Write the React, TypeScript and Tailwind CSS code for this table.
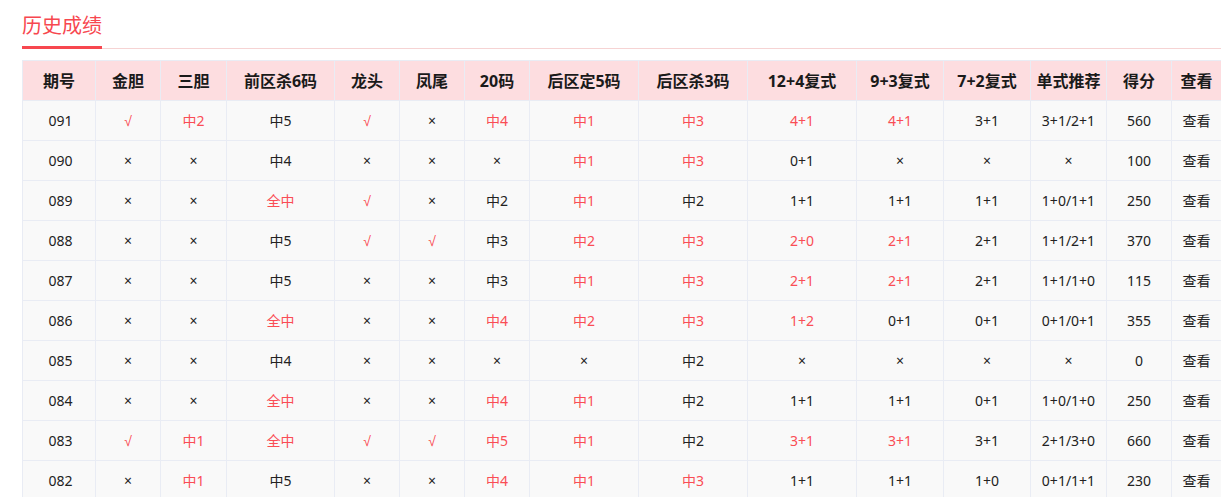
import React from "react";

type Cell = string | [string];

const R = (s: string): [string] => [s];

const rows: Cell[][] = [
  ["091", R("√"), R("中2"), "中5", R("√"), "×", R("中4"), R("中1"), R("中3"), R("4+1"), R("4+1"), "3+1", "3+1/2+1", "560"],
  ["090", "×", "×", "中4", "×", "×", "×", R("中1"), R("中3"), "0+1", "×", "×", "×", "100"],
  ["089", "×", "×", R("全中"), R("√"), "×", "中2", R("中1"), "中2", "1+1", "1+1", "1+1", "1+0/1+1", "250"],
  ["088", "×", "×", "中5", R("√"), R("√"), "中3", R("中2"), R("中3"), R("2+0"), R("2+1"), "2+1", "1+1/2+1", "370"],
  ["087", "×", "×", "中5", "×", "×", "中3", R("中1"), R("中3"), R("2+1"), R("2+1"), "2+1", "1+1/1+0", "115"],
  ["086", "×", "×", R("全中"), "×", "×", R("中4"), R("中2"), R("中3"), R("1+2"), "0+1", "0+1", "0+1/0+1", "355"],
  ["085", "×", "×", "中4", "×", "×", "×", "×", "中2", "×", "×", "×", "×", "0"],
  ["084", "×", "×", R("全中"), "×", "×", R("中4"), R("中1"), "中2", "1+1", "1+1", "0+1", "1+0/1+0", "250"],
  ["083", R("√"), R("中1"), R("全中"), R("√"), R("√"), R("中5"), R("中1"), "中2", R("3+1"), R("3+1"), "3+1", "2+1/3+0", "660"],
  ["082", "×", R("中1"), "中5", "×", "×", R("中4"), R("中1"), R("中3"), "1+1", "1+1", "1+0", "0+1/1+1", "230"],
];

const headers = ["期号", "金胆", "三胆", "前区杀6码", "龙头", "凤尾", "20码", "后区定5码", "后区杀3码", "12+4复式", "9+3复式", "7+2复式", "单式推荐", "得分", "查看"];
const widths = [73, 65, 66, 108, 65, 65, 65, 109, 109, 109, 87, 87, 76, 65, 50];

export default function App() {
  return (
    <div
      className="w-[1221px] h-[497px] overflow-hidden bg-white"
      style={{ fontFamily: '"Microsoft YaHei", "Noto Sans", "Noto Sans CJK SC", sans-serif' }}
    >
      <div className="pl-[22px] pt-[11px]">
        <div className="border-b border-[#f6d3d3]">
          <div className="inline-block border-b-[3px] border-[#f7474f] pb-[5px] text-[20px] leading-[30px] text-[#f7474f] -mb-px">
            历史成绩
          </div>
        </div>
        <table className="mt-[11px] border-collapse table-fixed" style={{ width: widths.reduce((a, b) => a + b, 0) }}>
          <colgroup>
            {widths.map((w, i) => (
              <col key={i} style={{ width: w }} />
            ))}
          </colgroup>
          <thead>
            <tr className="h-[40px] bg-[#fddde0]">
              {headers.map((h) => (
                <th key={h} className="border border-[#e9ecf4] text-center text-[16px] font-bold text-[#1a1a1a] whitespace-nowrap px-0">
                  {h}
                </th>
              ))}
            </tr>
          </thead>
          <tbody>
            {rows.map((r, i) => (
              <tr key={i} className="h-[40px] bg-[#f9f9f9]">
                {r.map((c, j) => {
                  const red = Array.isArray(c);
                  const t = red ? c[0] : c;
                  return (
                    <td
                      key={j}
                      className={`border border-[#e9ecf4] text-center text-[14px] whitespace-nowrap px-0 ${j === 0 ? "pl-[3px]" : ""} ${red ? "text-[#fa4d55]" : "text-[#222]"}`}
                    >
                      {t === "√" ? (
                        <span className="font-['Liberation_Sans',sans-serif] text-[14px]">√</span>
                      ) : (
                        t
                      )}
                    </td>
                  );
                })}
                <td className="border border-[#e9ecf4] text-center text-[14px] whitespace-nowrap px-0 text-[#222]">查看</td>
              </tr>
            ))}
          </tbody>
        </table>
      </div>
    </div>
  );
}
